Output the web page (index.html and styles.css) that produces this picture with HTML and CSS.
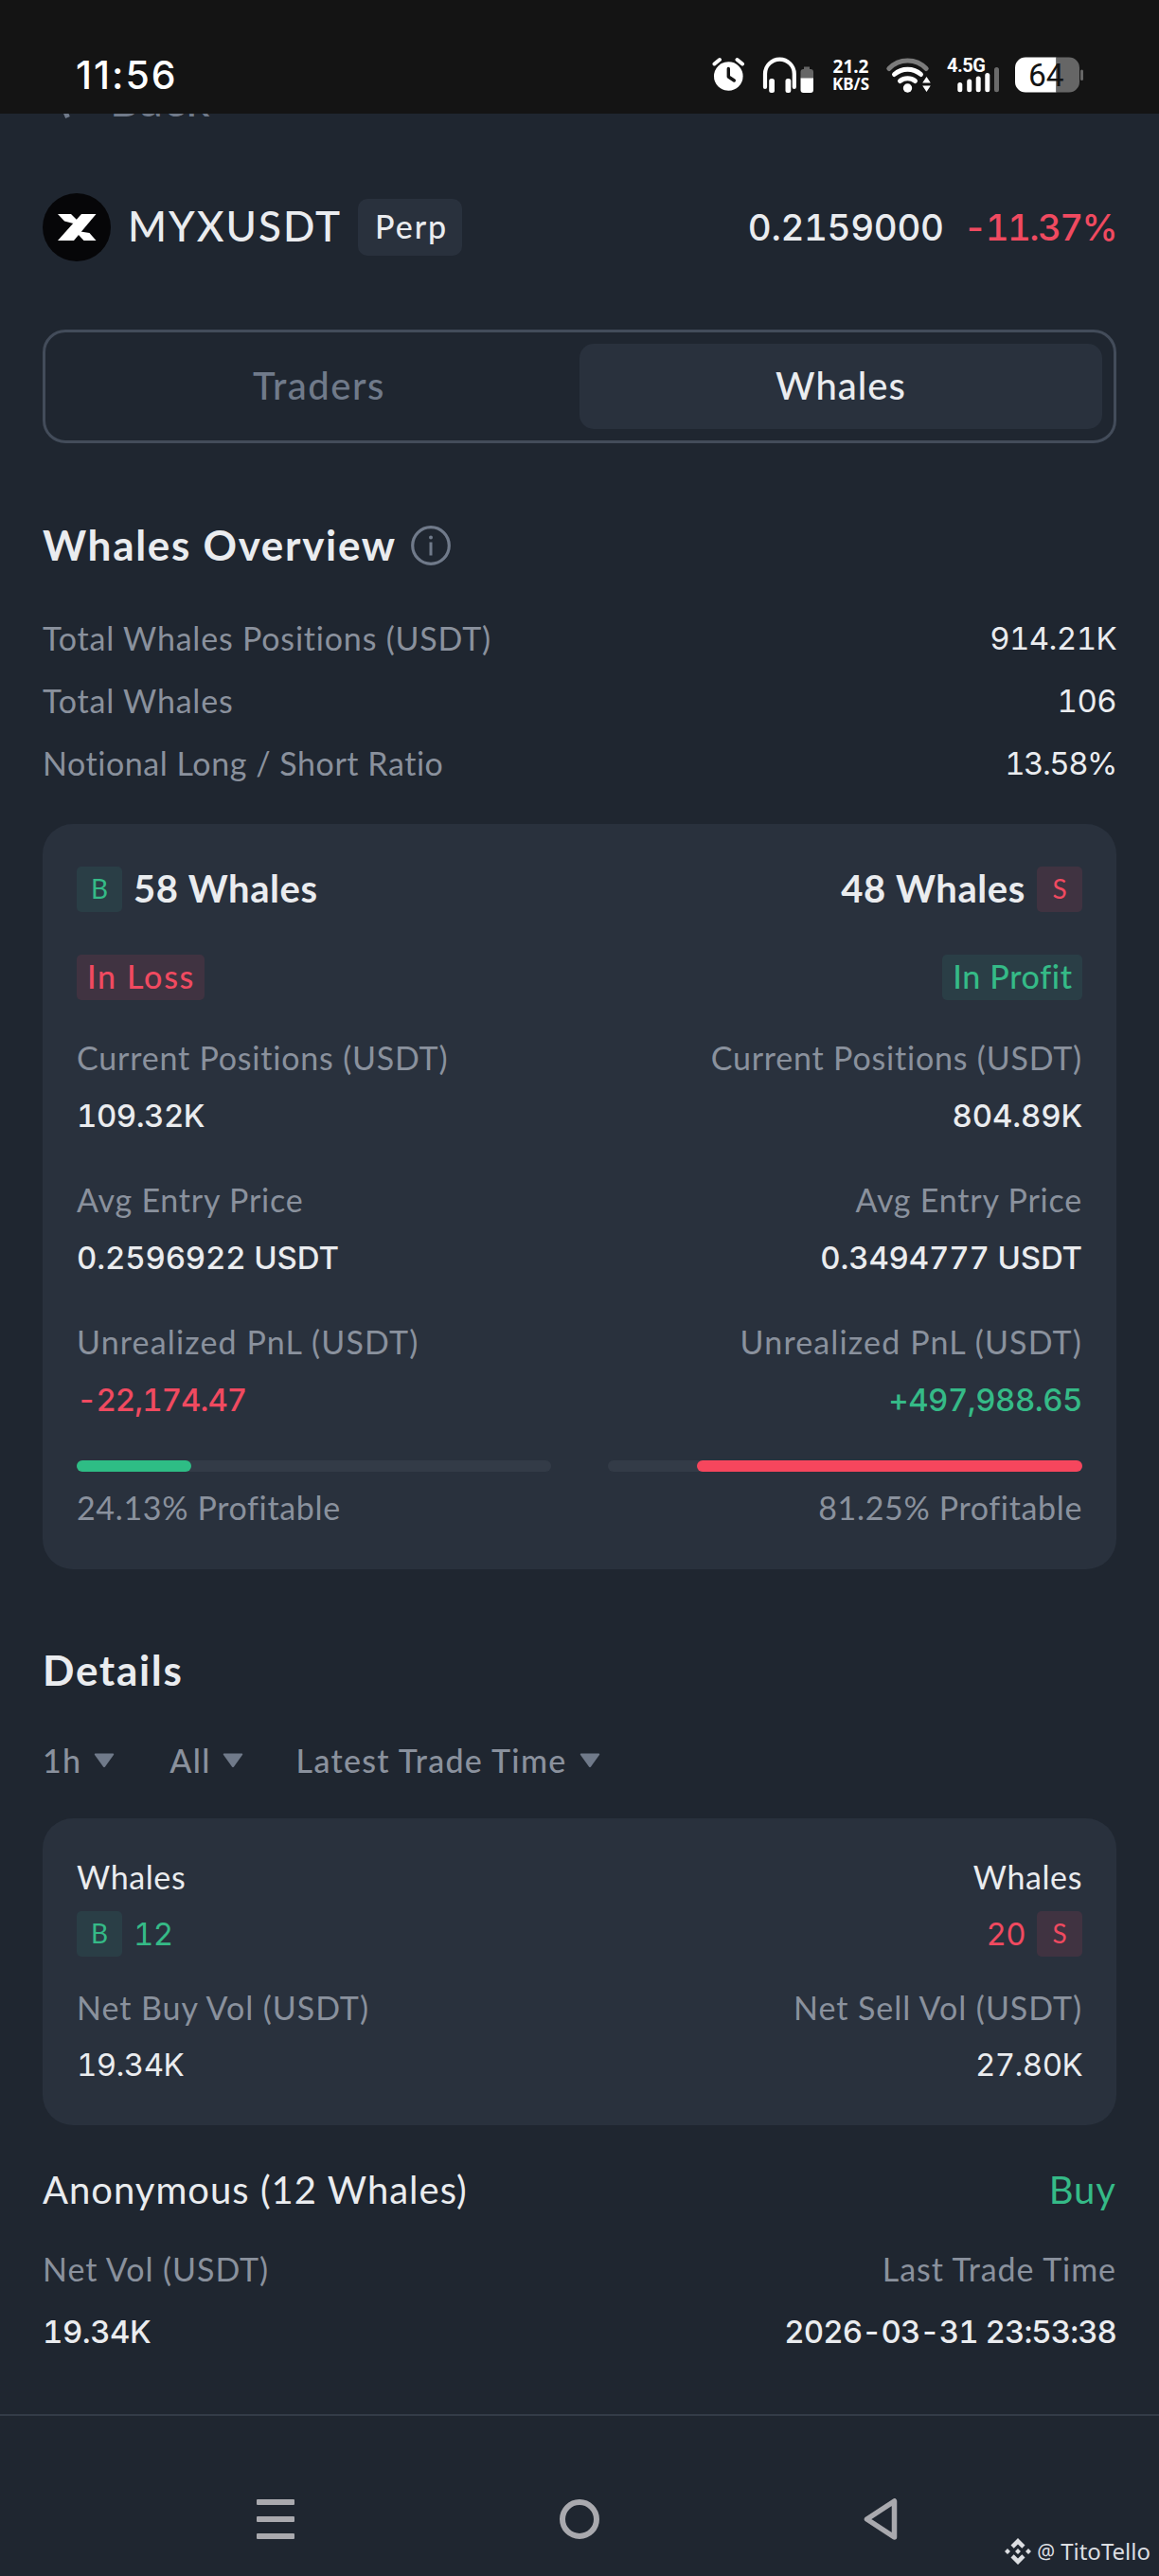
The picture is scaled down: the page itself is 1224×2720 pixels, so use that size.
FILE: index.html
```
<!DOCTYPE html>
<html lang="en">
<head>
<meta charset="utf-8">
<title>MYXUSDT Whales</title>
<link rel="stylesheet" href="styles.css">
</head>
<body>
<header class="statusbar">
  <span class="clock">11:56</span>
  <div class="status-icons">
    <svg width="34" height="36" viewBox="0 0 34 36"><circle cx="17.3" cy="20.5" r="15.3" fill="#fff"/><path d="M2.5 7.5 8 3M26.5 3l5.5 4.5" stroke="#fff" stroke-width="4" stroke-linecap="round"/><path d="M17.3 12.500v8.500l6 4" fill="none" stroke="#141414" stroke-width="3.400" stroke-linecap="round" stroke-linejoin="round"/></svg>
    <svg class="ic-phones" width="54" height="38" viewBox="0 0 54 38"><path d="M3 32V18a15.400 15.400 0 0 1 30.800 0v14" fill="none" stroke="#fff" stroke-width="4.200" stroke-linecap="round"/><rect x="7.200" y="23" width="5.800" height="15" rx="2.500" fill="#fff"/><rect x="24.500" y="23" width="5.800" height="15" rx="2.500" fill="#fff"/><path d="M44 10.500h6V13h1a3 3 0 0 1 3 3v7H40.500v-7a3 3 0 0 1 3-3h.5z" fill="#666"/><path d="M40.500 22.500H54V35a3 3 0 0 1-3 3h-7.500a3 3 0 0 1-3-3z" fill="#fff"/></svg>
    <div class="speed"><span>21.2</span><span class="unit">KB/S</span></div>
    <svg class="ic-wifi" width="47" height="38" viewBox="0 0 47 38"><g fill="none" stroke="#fff" stroke-width="5" stroke-linecap="round"><path stroke="#7c7c7c" d="M2.800 12.500a27 27 0 0 1 39.400 0"/><path d="M8.500 18.500a21 21 0 0 1 28 0"/><path d="M14.500 25.500a13 13 0 0 1 16 0"/></g><circle cx="22.500" cy="33" r="4.700" fill="#fff"/><path d="M42.500 21l4.300 6.500h-8.600zM42.500 37l4.300-6.500h-8.600z" fill="#fff"/></svg>
    <svg class="ic-signal" width="55" height="38" viewBox="0 0 55 38"><text x="0" y="16" font-family="Roboto, sans-serif" font-weight="700" font-size="20" fill="#fff" textLength="41">4.5G</text><g fill="#fff"><rect x="11.300" y="27" width="5" height="10.300" rx="2.500"/><rect x="21.200" y="23.500" width="5" height="13.800" rx="2.500"/><rect x="30.700" y="20.500" width="5" height="16.800" rx="2.500"/><rect x="40.300" y="17" width="5" height="20.300" rx="2.500"/><rect x="50" y="11" width="5" height="26.300" rx="2.500" fill="#6b6b6b"/></g></svg>
    <svg width="72" height="38" viewBox="0 0 72 38"><path d="M11 .5h32.500v37H11A11 11 0 0 1 0 26.500v-15A11 11 0 0 1 11 .5z" fill="#fff"/><path d="M43.500.5H57a11 11 0 0 1 11 11v15a11 11 0 0 1-11 11H43.500z" fill="#666"/><rect x="69" y="13.500" width="3" height="11.500" rx="1.500" fill="#666"/><text x="14" y="31" font-family="Roboto, sans-serif" font-size="33.500" fill="#141414">64</text></svg>
  </div>
</header>

<main class="page">
  <div class="back">
    <svg width="14" height="42" viewBox="0 0 14 42"><path d="M11.500 1 3 20l8.500 20" fill="none" stroke="#707a8a" stroke-width="5"/></svg>
    <span>Back</span>
  </div>

  <section class="pair">
    <svg class="coin" width="72" height="72" viewBox="-36 -36 72 72"><circle r="36" fill="#060608"/><g fill="#fff"><path d="M-20 14 5-14h15.500L-3 14z"/><path d="M-20-14h14l6.500 6.500L-3.500-4-13-6.500z"/><path d="M20.500 14h-13l-6.500-7L4 4.500l9.500 1.500z"/></g></svg>
    <h1 class="symbol">MYXUSDT</h1>
    <span class="perp">Perp</span>
    <div class="quote"><span class="price">0.2159000</span><span class="change">-11.37%</span></div>
  </section>

  <nav class="tabs">
    <span class="tab tab-traders">Traders</span>
    <span class="tab tab-active">Whales</span>
  </nav>

  <section>
    <h2 class="heading overview"><span>Whales Overview</span>
      <svg width="42" height="42" viewBox="0 0 42 42"><circle cx="21" cy="21" r="19.300" fill="none" stroke="#707a8a" stroke-width="3.200"/><circle cx="21" cy="12.500" r="2" fill="#707a8a"/><path d="M21 17.500v14" stroke="#707a8a" stroke-width="3"/></svg>
    </h2>
    <dl class="stats">
      <div><dt class="label">Total Whales Positions (USDT)</dt><dd class="num medium">914.21K</dd></div>
      <div><dt class="label">Total Whales</dt><dd class="num medium">106</dd></div>
      <div><dt class="label ratio">Notional Long / Short Ratio</dt><dd class="num medium percent">13.58%</dd></div>
    </dl>
    <div class="card overview-card">
      <div class="side">
        <div class="count"><span class="badge buy">B</span><span class="total">58 Whales</span></div>
        <span class="state state-loss sell">In Loss</span>
        <div class="metric"><span class="label">Current Positions (USDT)</span><span class="num strong snug">109.32K</span></div>
        <div class="metric"><span class="label">Avg Entry Price</span><span class="num strong">0.2596922 USDT</span></div>
        <div class="metric"><span class="label pnl">Unrealized PnL (USDT)</span><span class="num strong down tight">-22,174.47</span></div>
        <div class="bar"><div class="fill fill-buy" style="width:24.13%"></div></div>
        <span class="label profitable">24.13% Profitable</span>
      </div>
      <div class="side right">
        <div class="count"><span class="total">48 Whales</span><span class="badge sell">S</span></div>
        <span class="state state-profit buy">In Profit</span>
        <div class="metric"><span class="label">Current Positions (USDT)</span><span class="num strong">804.89K</span></div>
        <div class="metric"><span class="label">Avg Entry Price</span><span class="num strong">0.3494777 USDT</span></div>
        <div class="metric"><span class="label pnl">Unrealized PnL (USDT)</span><span class="num strong up snug">+497,988.65</span></div>
        <div class="bar"><div class="fill fill-sell" style="width:81.25%"></div></div>
        <span class="label profitable">81.25% Profitable</span>
      </div>
    </div>
  </section>

  <section>
    <h2 class="heading details">Details</h2>
    <div class="filters">
      <span class="filter"><span>1h</span><svg width="22" height="16" viewBox="0 0 22 16"><path d="M1.500.5h19q1.200.3.500 1.500l-9 12.500q-1 1-2 0L1 2Q.3.8 1.500.5z"/></svg></span>
      <span class="filter all"><span>All</span><svg width="22" height="16" viewBox="0 0 22 16"><path d="M1.500.5h19q1.200.3.500 1.500l-9 12.500q-1 1-2 0L1 2Q.3.8 1.500.5z"/></svg></span>
      <span class="filter sort"><span>Latest Trade Time</span><svg width="22" height="16" viewBox="0 0 22 16"><path d="M1.500.5h19q1.200.3.500 1.500l-9 12.500q-1 1-2 0L1 2Q.3.8 1.500.5z"/></svg></span>
    </div>
    <div class="card details-card">
      <div class="side">
        <span class="name">Whales</span>
        <div class="tally up"><span class="badge buy">B</span><span class="num">12</span></div>
        <div class="metric"><span class="label wide">Net Buy Vol (USDT)</span><span class="num">19.34K</span></div>
      </div>
      <div class="side right">
        <span class="name">Whales</span>
        <div class="tally down"><span class="num">20</span><span class="badge sell">S</span></div>
        <div class="metric"><span class="label wide">Net Sell Vol (USDT)</span><span class="num">27.80K</span></div>
      </div>
    </div>
  </section>

  <article class="trade">
    <div class="trade-head"><span class="trader">Anonymous (12 Whales)</span><span class="up action">Buy</span></div>
    <div class="trade-row"><span class="label wide">Net Vol (USDT)</span><span class="label wide">Last Trade Time</span></div>
    <div class="trade-row"><span class="num strong snug">19.34K</span><span class="num strong tight">2026-03-31 23:53:38</span></div>
  </article>
</main>

<footer class="navbar">
  <svg width="40" height="42" viewBox="0 0 40 42"><g fill="#a9a9ae"><rect width="40" height="6" rx="1"/><rect y="18" width="40" height="6" rx="1"/><rect y="36" width="40" height="6" rx="1"/></g></svg>
  <svg width="42" height="42" viewBox="0 0 42 42"><circle cx="21" cy="21" r="18" fill="none" stroke="#a9a9ae" stroke-width="6"/></svg>
  <svg width="36" height="46" viewBox="0 0 36 46"><path d="M32.500 4v38L3.500 23z" fill="none" stroke="#a9a9ae" stroke-width="5.500" stroke-linejoin="round"/></svg>
  <div class="watermark">
    <svg width="28" height="28" viewBox="0 0 28 28" fill="#dcdee2"><path d="M14 0l7.500 7.500-3.200 3.200L14 6.400 9.700 10.700 6.500 7.500zM14 28l-7.500-7.500 3.200-3.200L14 21.600l4.300-4.300 3.200 3.200zM14 11l3 3-3 3-3-3zM3 11l3 3-3 3-3-3zM25 11l3 3-3 3-3-3z"/></svg>
    <span class="at">@</span><span>TitoTello</span>
  </div>
</footer>
</body>
</html>
```
FILE: styles.css
```
* { box-sizing: border-box; }
body {
  margin: 0;
  width: 1224px;
  height: 2720px;
  overflow: hidden;
  display: flex;
  flex-direction: column;
  background: #1f2630;
  color: #eaecef;
  font-family: Lato, "Open Sans", sans-serif;
  font-size: 34px;
  line-height: 60px;
}
h1, h2, dl, dd { margin: 0; font-weight: inherit; }
svg { display: block; flex: none; overflow: visible; }
span { white-space: nowrap; }

/* System status bar */
.statusbar {
  position: relative;
  z-index: 1;
  height: 120px;
  flex: none;
  padding: 38px 80px 0 80px;
  display: flex;
  justify-content: space-between;
  background: #141414;
  color: #fff;
}
.clock { font: 500 41px/82px Inter, sans-serif; letter-spacing: 2px; }
.status-icons { display: flex; gap: 17px; padding-top: 22px; }
.status-icons > .ic-phones { margin-left: 2px; }
.speed {
  display: flex;
  flex-direction: column;
  align-items: center;
  margin-left: 2px;
  width: 41px;
  font: 700 19px/19px "Noto Sans", sans-serif;
  padding-top: 1px;
}
.speed .unit { font-size: 17px; line-height: 18px; }

/* Page */
.page { padding: 0 45px; flex: none; }
.back {
  margin-top: -45px;
  height: 60px;
  display: flex;
  align-items: center;
  gap: 42px;
  padding-left: 15px;
  color: #707a8a;
  font-size: 48px;
  font-weight: 500;
  letter-spacing: 1px;
}
.pair { margin-top: 69px; height: 72px; display: flex; align-items: center; }
.symbol { margin-left: 18px; padding-bottom: 4px; font-size: 44px; font-weight: 500; letter-spacing: 2px; }
.perp {
  margin-left: 17px;
  width: 110px;
  height: 60px;
  padding-left: 3px;
  text-align: center;
  border-radius: 10px;
  background: #29313d;
  font-weight: 500;
  line-height: 57px;
  letter-spacing: 2px;
}
.quote { margin-left: auto; display: flex; gap: 21px; font: 500 38.5px/58px Inter, sans-serif; font-feature-settings: "tnum"; letter-spacing: -.35px; }
.change { color: #f04a60; letter-spacing: -1.7px; }

.tabs {
  margin-top: 72px;
  height: 120px;
  border: 3px solid #434c5a;
  border-radius: 24px;
  padding: 12px;
  display: grid;
  grid-template-columns: 1fr 1fr;
  font-size: 40px;
  font-weight: 500;
  line-height: 88px;
  text-align: center;
}
.tab { border-radius: 15px; letter-spacing: 1px; }
.tab-traders { padding-left: 2px; color: #707a8a; letter-spacing: 1.5px; }
.tab-active { background: #29313d; }

.heading { height: 60px; font-size: 44px; font-weight: 700; line-height: 58px; letter-spacing: 1.7px; }
.overview { margin-top: 78px; display: flex; align-items: center; gap: 15px; }
.overview span { padding-bottom: 3px; }
.details { margin-top: 77px; }

.stats { margin-top: 35px; }
.stats > div { display: flex; justify-content: space-between; line-height: 66px; }
.stats dt { line-height: 65px; }

.label { color: #8a919d; letter-spacing: .8px; }
.pnl { letter-spacing: 1.15px; }
.ratio { letter-spacing: .55px; }
.wide { letter-spacing: .95px; }
.num { font-family: Inter, sans-serif; font-size: 33px; font-feature-settings: "tnum"; letter-spacing: -.6px; }
.medium { font-weight: 400; }
.percent { letter-spacing: -1.5px; }
.strong { font-weight: 550; letter-spacing: -.15px; }
.snug { letter-spacing: -.5px; }
.tight { letter-spacing: -.95px; }
.up { color: #35ba87; }
.down { color: #f04a60; }

.card {
  margin-top: 31px;
  border-radius: 32px;
  background: #29313d;
  display: grid;
  grid-template-columns: 501px 501px;
  justify-content: space-between;
}
.overview-card { padding: 45px 36px 35px; }
.details-card { padding: 32px 36px 34px; }
.side { display: flex; flex-direction: column; align-items: flex-start; }
.right { align-items: flex-end; }

.count { height: 48px; display: flex; align-items: center; gap: 12px; font-size: 40px; font-weight: 700; letter-spacing: .6px; }
.total { padding-bottom: 3px; }
.badge {
  width: 48px;
  height: 48px;
  border-radius: 5px;
  text-align: center;
  font-size: 28px;
  font-weight: 400;
  line-height: 46px;
  letter-spacing: 0;
}
.buy { background: #2a3e46; color: #35ba87; }
.sell { background: #403341; color: #f04a60; }
.state {
  margin: 45px 0 2px;
  height: 48px;
  padding-left: 1px;
  border-radius: 5px;
  font-weight: 500;
  line-height: 45px;
  text-align: center;
}
.state-loss { width: 135px; letter-spacing: 1.7px; }
.state-profit { width: 148px; letter-spacing: .65px; }
.metric { display: flex; flex-direction: column; align-items: inherit; }
.overview-card .metric { margin-top: 29px; gap: 1px; }
.details-card .metric { margin-top: 18px; }
.bar { margin-top: 34px; width: 100%; height: 12px; border-radius: 6px; background: #333b47; display: flex; }
.right .bar { justify-content: flex-end; }
.fill { border-radius: 6px; }
.fill-buy { background: #2ebd85; }
.fill-sell { background: #f6465d; }
.profitable { margin-top: 8px; letter-spacing: .65px; }

.filters { margin-top: 35px; display: flex; gap: 58px; color: #8a919d; font-weight: 500; letter-spacing: 1.3px; }
.filter { display: flex; align-items: center; gap: 13px; }
.all { gap: 12px; }
.sort { margin-left: -2px; }
.filter svg { fill: #707a8a; }

.name { letter-spacing: .6px; }
.tally { height: 60px; display: flex; align-items: center; gap: 12px; }

.trade-head { margin-top: 38px; display: flex; justify-content: space-between; font-size: 40px; letter-spacing: 1px; }
.trade-row { display: flex; justify-content: space-between; line-height: 66px; }
.trade-head + .trade-row { margin-top: 21px; }

/* System navigation */
.navbar {
  position: relative;
  margin-top: 54px;
  flex: 1;
  border-top: 2px solid #333b47;
  padding: 88px 276px 0 271px;
  display: flex;
  justify-content: space-between;
  align-items: flex-start;
}
.navbar > svg:nth-child(3) { margin-top: -2px; }
.watermark {
  position: absolute;
  right: 9px;
  bottom: 8px;
  display: flex;
  align-items: center;
  gap: 6px;
  height: 36px;
  color: #dcdee2;
  font: 400 24px/36px "Noto Sans", sans-serif;
}
.at { font-size: 21px; }
```
